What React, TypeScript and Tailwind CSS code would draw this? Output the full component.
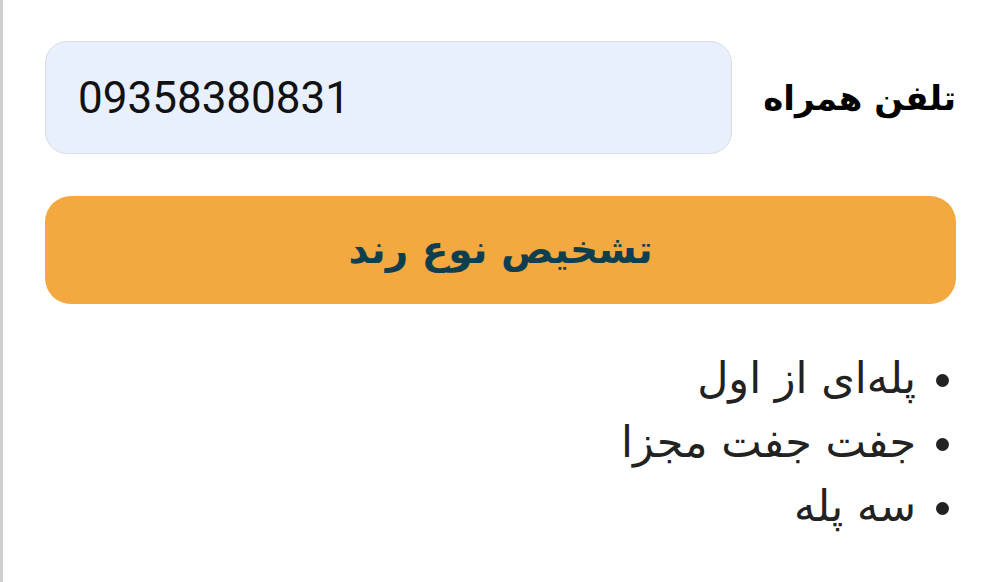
import React from 'react';

const items = ['پله‌ای از اول', 'جفت جفت مجزا', 'سه پله'];

export default function App() {
  return (
    <div dir="rtl" className="min-h-[582px] bg-white border-l-[3px] border-[#cfcfcf] pl-[42px] pr-[38px] pt-[41px]" style={{ fontFamily: '"DejaVu Sans", sans-serif' }}>
      {/* Phone row */}
      <div className="flex items-center gap-[31px]">
        <label className="text-[34px] font-bold text-black whitespace-nowrap leading-none">تلفن همراه</label>
        <input
          dir="ltr"
          readOnly
          value="09358380831"
          className="flex-1 min-w-0 h-[113px] rounded-[22px] bg-[#e8f0fe] border border-[#dadce0] px-[32px] text-[44px] text-[#111] outline-none"
          style={{ fontFamily: 'Roboto, sans-serif' }}
        />
      </div>

      {/* Submit */}
      <button className="mt-[42px] w-full h-[108px] rounded-[26px] bg-[#f4a840] text-[#0d3f4f] text-[39px] font-bold">
        تشخیص نوع رند
      </button>

      {/* Types */}
      <ul className="mt-[42px] list-disc pr-[40px] text-[43px] text-[#222] leading-[64px]">
        {items.map((t) => (
          <li key={t}>{t}</li>
        ))}
      </ul>
    </div>
  );
}
